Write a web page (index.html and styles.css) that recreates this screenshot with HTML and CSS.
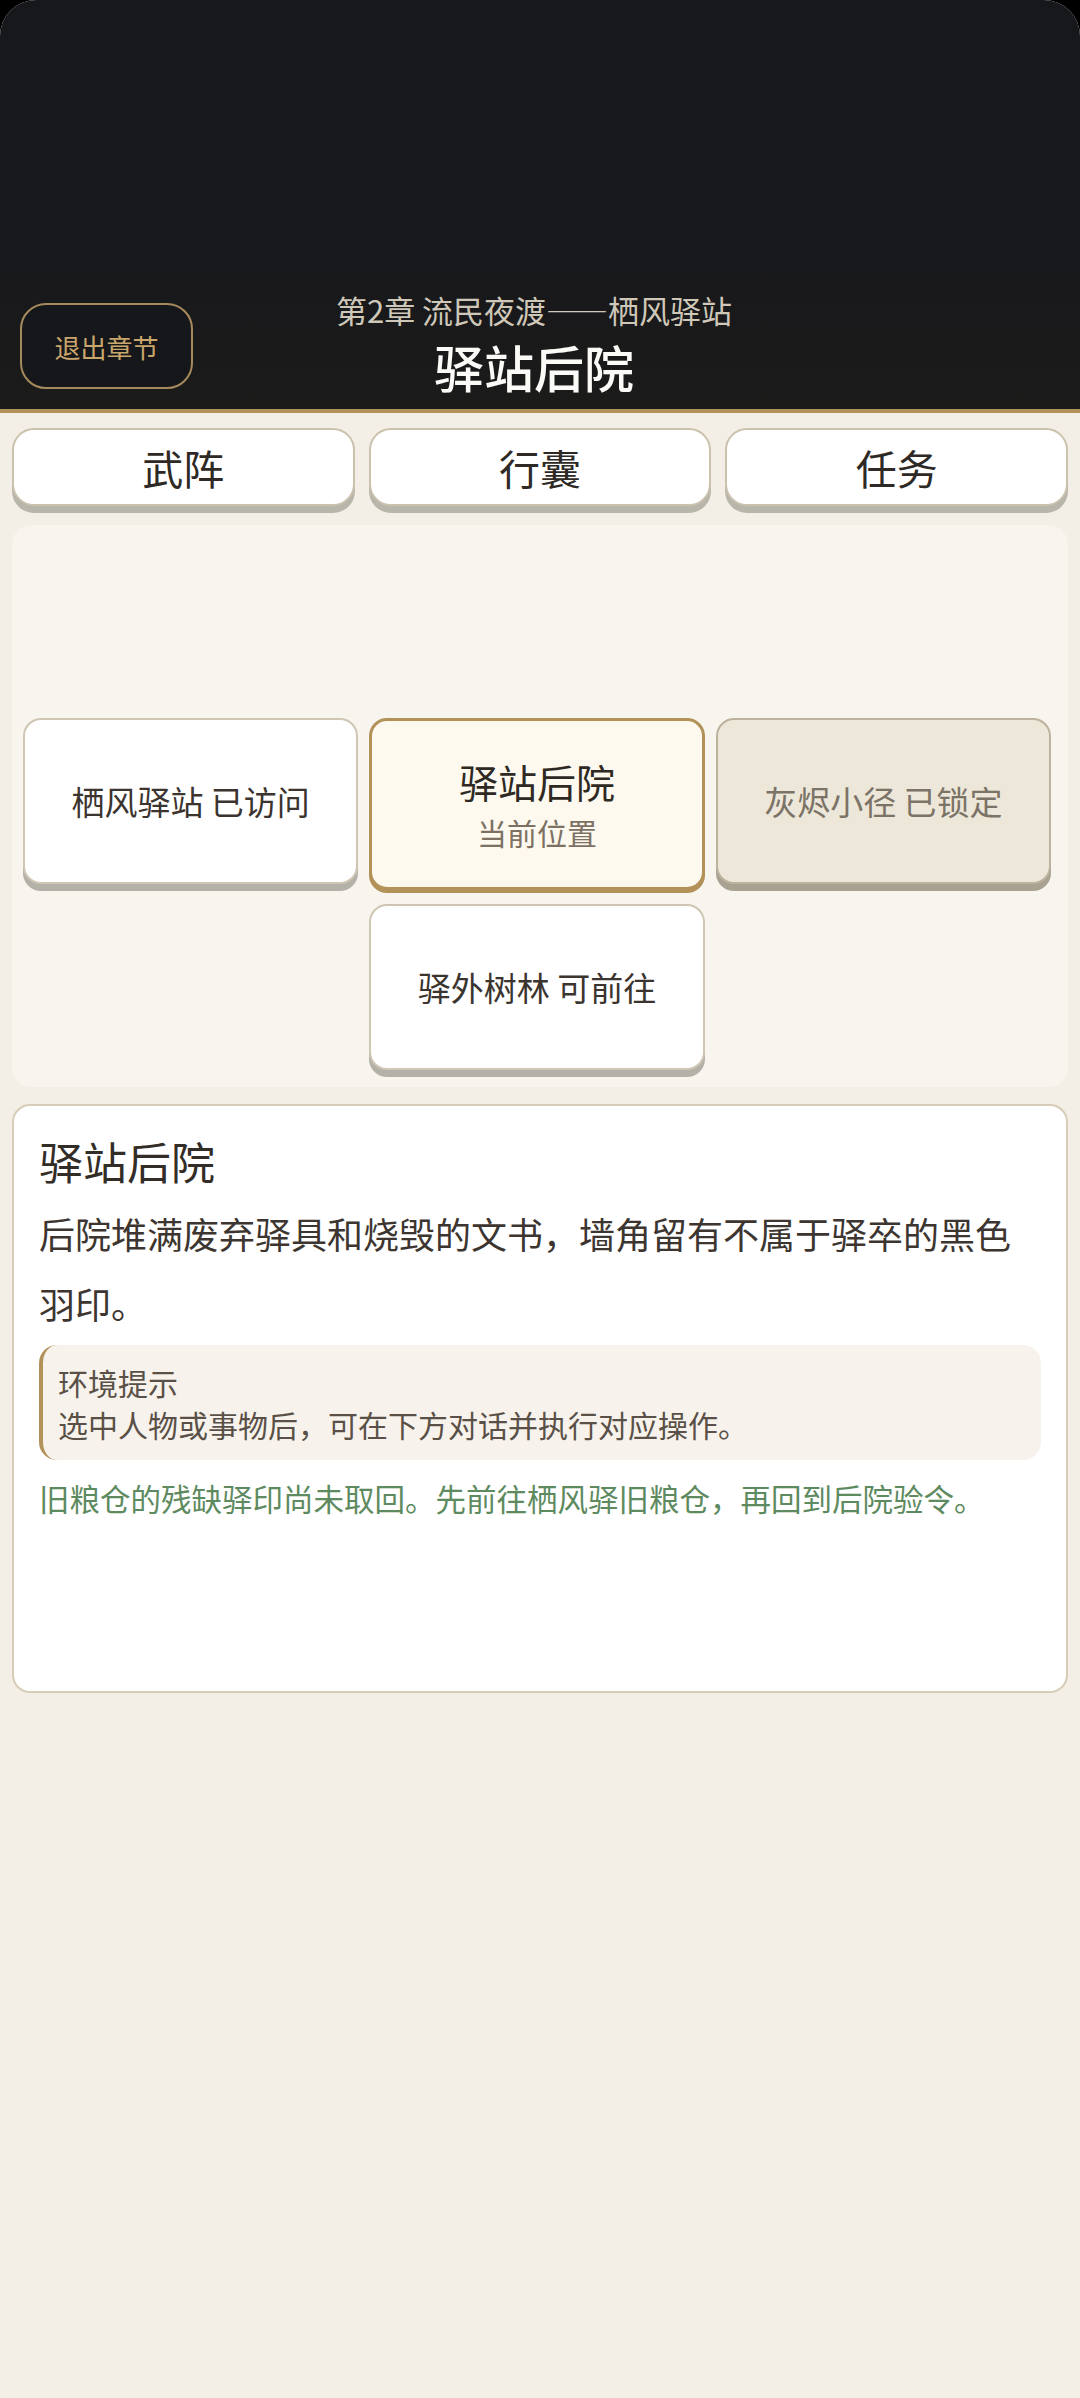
FILE: index.html
```html
<!DOCTYPE html>
<html lang="zh-CN">
<head>
    <meta charset="UTF-8">
    <meta name="viewport" content="width=device-width, initial-scale=1.0">
    <title>驿站后院</title>
    <link rel="stylesheet" href="styles.css">
</head>
<body>
    <div class="screen">
        <!-- Chapter header -->
        <header class="topbar">
            <button type="button" class="exit-btn">退出章节</button>
            <div class="title-block">
                <div class="chapter">第2章 流民夜渡——栖风驿站</div>
                <h1 class="scene">驿站后院</h1>
            </div>
            <div class="spacer"></div>
        </header>

        <!-- Tabs -->
        <nav class="tabs">
            <button type="button" class="tab">武阵</button>
            <button type="button" class="tab">行囊</button>
            <button type="button" class="tab">任务</button>
        </nav>

        <!-- Location map -->
        <section class="map">
            <div class="node visited pos-west">栖风驿站 已访问</div>
            <div class="node current pos-center">
                <span class="node-name">驿站后院</span>
                <span class="node-sub">当前位置</span>
            </div>
            <div class="node locked pos-east">灰烬小径 已锁定</div>
            <div class="node open pos-south">驿外树林 可前往</div>
        </section>

        <!-- Scene detail -->
        <section class="detail">
            <h2 class="detail-title">驿站后院</h2>
            <p class="detail-text">后院堆满废弃驿具和烧毁的文书，墙角留有不属于驿卒的黑色羽印。</p>
            <div class="hint">
                <div class="hint-label">环境提示</div>
                <div class="hint-text">选中人物或事物后，可在下方对话并执行对应操作。</div>
            </div>
            <p class="quest-text">旧粮仓的残缺驿印尚未取回。先前往栖风驿旧粮仓，再回到后院验令。</p>
        </section>
    </div>
</body>
</html>
```

FILE: styles.css
```css
body {
    margin: 0;
    background-color: #000;
    font-family: "Noto Sans CJK SC", "Noto Sans", sans-serif;
}
.screen {
    min-height: 2398px;
    background-color: #f4efe6;
    border-radius: 36px 36px 0 0;
    overflow: hidden;
}

/* header */
.topbar {
    display: grid;
    grid-template-columns: 1fr auto 1fr;
    padding: 290px 32px 13px 20px;
    background: linear-gradient(#17181c 60%, #1c1b1a);
    border-bottom: 4px solid #b3915a;
}
.exit-btn {
    justify-self: start;
    align-self: end;
    margin-bottom: 7px;
    width: 173px;
    height: 86px;
    background-color: #16171a;
    border: 2px solid #a58a5e;
    border-radius: 26px;
    color: #c9a66c;
    font-family: inherit;
    font-size: 26px;
    padding: 0;
}
.title-block {
    text-align: center;
}
.chapter {
    color: #cfc8b9;
    font-size: 31px;
    line-height: 40px;
}
.scene {
    margin: 6px 0 0;
    color: #fbfaf6;
    font-size: 50px;
    font-weight: 500;
    line-height: 60px;
}

/* tabs */
.tabs {
    display: grid;
    grid-template-columns: repeat(3, 1fr);
    gap: 14px;
    padding: 15px 12px 0;
}
.tab {
    height: 78px;
    background-color: #fff;
    border: 2px solid #cbc2ae;
    border-radius: 22px;
    box-shadow: 0 7px 0 #b8b5ab;
    color: #2e2925;
    font-family: inherit;
    font-size: 41px;
    padding: 0;
}

/* map */
.map {
    display: grid;
    grid-template-columns: repeat(3, 1fr);
    grid-template-rows: 174px 175px 174px;
    gap: 11px;
    margin: 19px 12px 0;
    padding: 8px 17px 9px 11px;
    background-color: #f8f5ee;
    border-radius: 20px;
}
.pos-west { grid-column: 1; grid-row: 2; }
.pos-center { grid-column: 2; grid-row: 2; }
.pos-east { grid-column: 3; grid-row: 2; }
.pos-south { grid-column: 2; grid-row: 3; }
.node {
    box-sizing: border-box;
    height: 166px;
    display: flex;
    flex-direction: column;
    align-items: center;
    justify-content: center;
    background-color: #fff;
    border: 2px solid #cfc6b3;
    border-radius: 18px;
    box-shadow: 0 7px 0 #b4b1a9;
    color: #3b342f;
    font-size: 33px;
}
.node.current {
    height: 172px;
    background-color: #fdf9ee;
    border: 3px solid #b3925a;
    box-shadow: 0 3px 0 #b3925a;
}
.node-name {
    color: #2f2924;
    font-size: 39px;
    line-height: 50px;
}
.node-sub {
    margin-top: 6px;
    color: #7d7164;
    font-size: 30px;
    line-height: 40px;
}
.node.locked {
    background-color: #ede7da;
    border-color: #bcb29e;
    box-shadow: 0 7px 0 #a9a293;
    color: #7b7366;
}

/* detail card */
.detail {
    box-sizing: border-box;
    min-height: 589px;
    margin: 17px 12px 0;
    padding: 27px 25px;
    background-color: #fff;
    border: 2px solid #d6ccb8;
    border-radius: 18px;
}
.detail-title {
    margin: 0 0 8px;
    color: #332d28;
    font-size: 44px;
    font-weight: 400;
    line-height: 57px;
}
.detail-text {
    margin: 0 0 7px;
    color: #3d3530;
    font-size: 36px;
    line-height: 70px;
}
.hint {
    padding: 16px 16px 15px 15px;
    background-color: #f7f3ec;
    border-left: 4px solid #b3925a;
    border-radius: 18px;
    color: #5a5047;
    font-size: 30px;
    line-height: 42px;
}
.quest-text {
    margin: 17px 0 0;
    color: #5e8a60;
    font-size: 30.5px;
    line-height: 42px;
}
```
